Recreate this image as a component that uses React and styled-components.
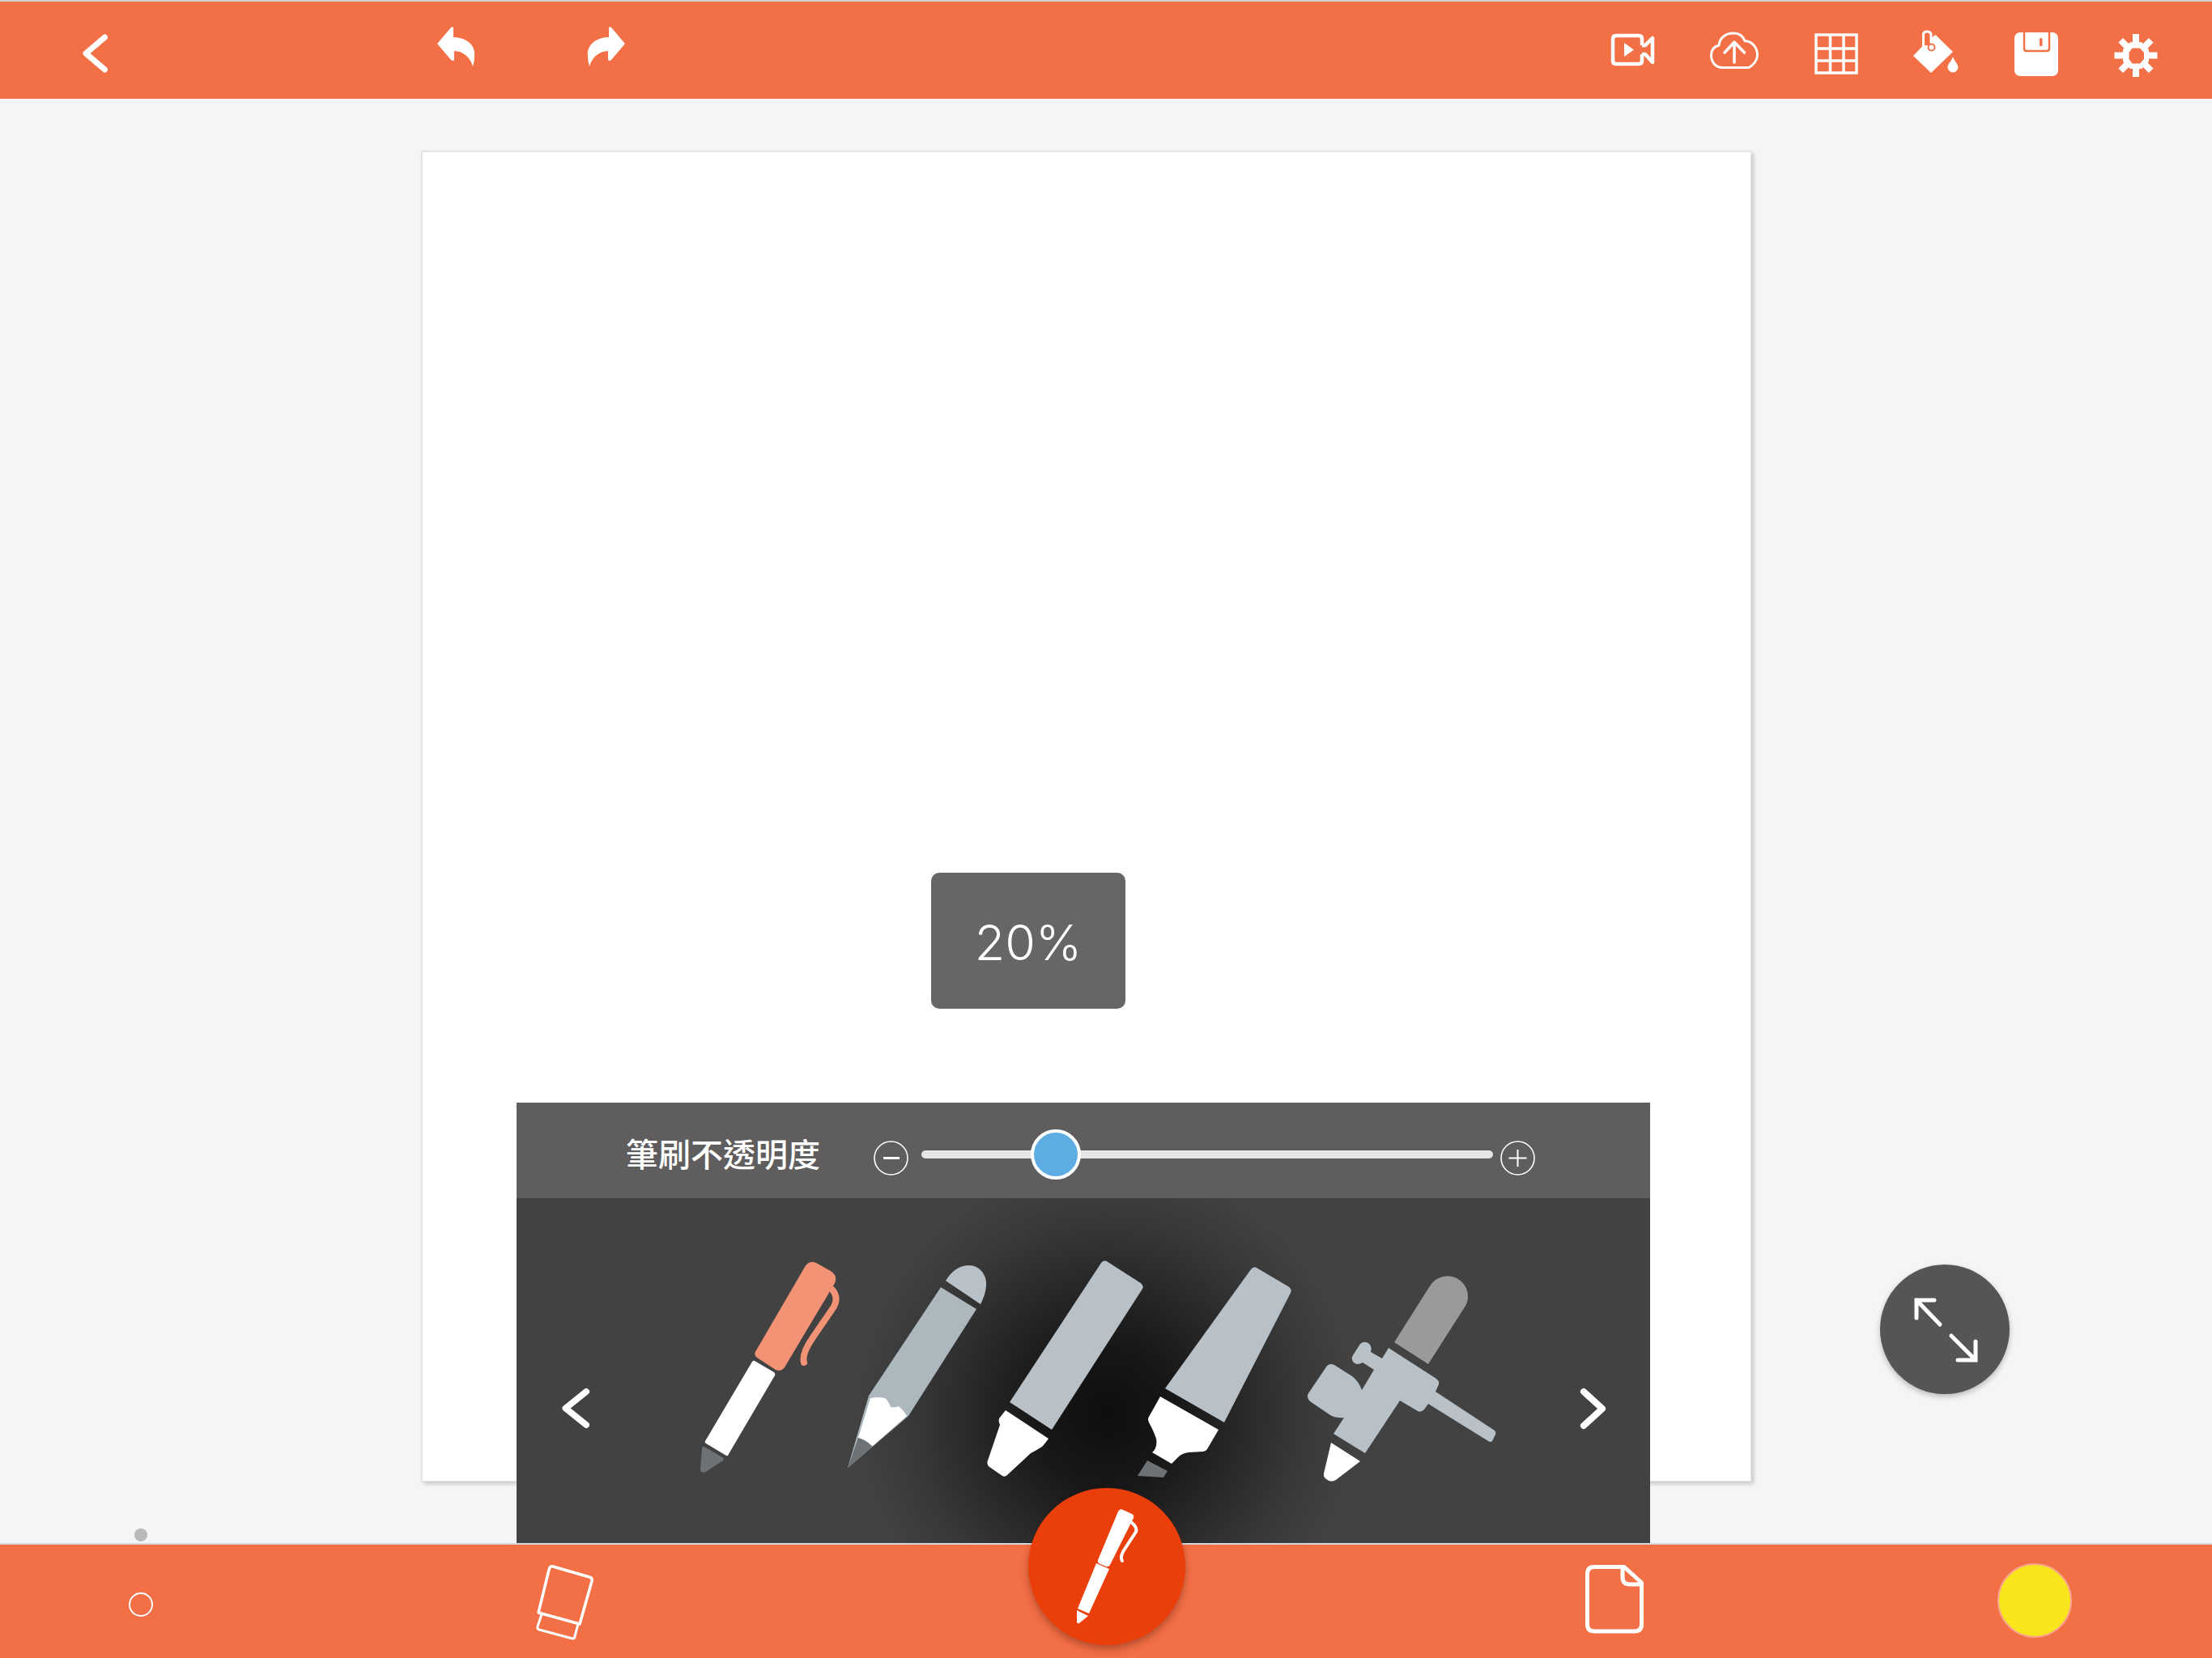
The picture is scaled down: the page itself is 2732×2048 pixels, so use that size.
import React from "react";
import styled, { createGlobalStyle } from "styled-components";

const ORANGE = "#f36f46";
const CAP = "#f39375";
const STEEL = "#b8c1c7";
const LEAD = "#6c7276";

const GlobalStyle = createGlobalStyle`
  html, body {
    margin: 0;
    padding: 0;
    background: #f5f5f5;
    font-family: "Liberation Sans", "Noto Sans CJK TC", sans-serif;
  }
`;

const Page = styled.div`
  position: relative;
  display: flex;
  flex-direction: column;
  width: 2732px;
  height: 2048px;
  overflow: hidden;
  background: #f5f5f5;
`;

const TopBar = styled.header`
  display: flex;
  flex: none;
  height: 120px;
  border-top: 2px solid #cfcfcf;
  background: ${ORANGE};
`;

const TopLeft = styled.div`
  display: flex;
  padding-left: 102px;
`;

const HistoryGroup = styled.div`
  display: flex;
  gap: 140px;
  margin-left: 407px;
`;

const TopRight = styled.div`
  display: flex;
  gap: 69px;
  margin-left: auto;
  padding-right: 68px;
`;

const Main = styled.main`
  position: relative;
  flex: 1;
  padding: 64px 0 0 520px;
`;

const Paper = styled.div`
  box-sizing: border-box;
  width: 1643px;
  height: 1644px;
  background: #fff;
  border: 2px solid #e6e6e6;
  border-right-width: 1px;
  border-bottom-width: 1px;
  box-shadow: 3px 3px 5px rgba(0, 0, 0, 0.18);
`;

const Tooltip = styled.div`
  position: absolute;
  left: 1150px;
  top: 956px;
  display: flex;
  align-items: center;
  justify-content: center;
  box-sizing: border-box;
  width: 240px;
  height: 168px;
  padding-top: 4px;
  border-radius: 10px;
  background: #666;
  color: #fff;
  font-family: "Inter", "Liberation Sans", sans-serif;
  font-size: 61px;
  font-weight: 300;
  line-height: 1;
`;

const PagerDot = styled.span`
  position: absolute;
  left: 166px;
  top: 1766px;
  width: 16px;
  height: 16px;
  border-radius: 50%;
  background: #b9b9b9;
`;

const Panel = styled.section`
  position: absolute;
  left: 638px;
  top: 1240px;
  display: flex;
  flex-direction: column;
  width: 1400px;
  height: 544px;
`;

const SliderRow = styled.div`
  display: flex;
  flex: none;
  align-items: center;
  height: 118px;
  padding-left: 135px;
  background: #5f5d5e;
`;

const SliderLabel = styled.span`
  width: 237px;
  margin-top: 6px;
  color: #fff;
  font-family: "Noto Sans CJK TC", "Liberation Sans", sans-serif;
  font-size: 40px;
  font-weight: 500;
  line-height: 1;
  white-space: nowrap;
`;

const RoundStep = styled.svg`
  display: block;
  flex: none;
  width: 43px;
  height: 43px;
  margin-top: 18px;
  margin-left: ${(p) => p.$gap}px;
`;

const Track = styled.div`
  position: relative;
  flex: none;
  width: 706px;
  height: 10px;
  margin-top: 10px;
  margin-left: 16px;
  border-radius: 5px;
  background: #e5e5e5;
`;

const Thumb = styled.span`
  position: absolute;
  top: -26px;
  box-sizing: border-box;
  width: 62px;
  height: 62px;
  margin-left: -31px;
  border: 4px solid #fff;
  border-radius: 50%;
  background: #5dade2;
`;

const BrushRow = styled.div`
  display: flex;
  flex: 1;
  padding-left: 56px;
  background: radial-gradient(
    circle at 729px 267px,
    #0e0e0e 0,
    #181818 90px,
    #272727 160px,
    #383838 240px,
    #424242 310px
  );
`;

const BrushList = styled.div`
  display: flex;
  margin-left: 137px;
  margin-right: 105px;
`;

const BottomBar = styled.footer`
  display: flex;
  flex: none;
  align-items: center;
  height: 140px;
  border-top: 2px solid #d3dadc;
  background: ${ORANGE};
`;

const RingTool = styled.span`
  box-sizing: border-box;
  flex: none;
  width: 30px;
  height: 30px;
  margin-top: 8px;
  margin-left: 159px;
  border: 2px solid #fff;
  border-radius: 50%;
`;

const BarSlot = styled.div`
  display: flex;
  flex: none;
  align-self: stretch;
  margin-left: ${(p) => p.$gap}px;
`;

const ColorWell = styled.span`
  box-sizing: border-box;
  flex: none;
  width: 92px;
  height: 92px;
  margin-top: -2px;
  margin-left: 437px;
  border: 2px solid #f6a58d;
  border-radius: 50%;
  background: #f9e51c;
`;

const PenFab = styled.button`
  position: absolute;
  left: 1270px;
  top: 1838px;
  display: flex;
  align-items: center;
  justify-content: center;
  width: 194px;
  height: 194px;
  padding: 0;
  border: 0;
  border-radius: 50%;
  background: #ea3f0a;
  box-shadow: 0 5px 10px rgba(90, 30, 10, 0.4);
`;

const ExpandFab = styled.button`
  position: absolute;
  left: 2322px;
  top: 1440px;
  display: flex;
  align-items: center;
  justify-content: center;
  width: 160px;
  height: 160px;
  padding: 0;
  border: 0;
  border-radius: 50%;
  background: #565455;
  box-shadow: 0 3px 7px rgba(0, 0, 0, 0.25);
`;

const GlyphSvg = styled.svg`
  display: block;
  flex: none;
  overflow: visible;
`;

// the viewBox is the drawing's place on the page, so paths read in page pixels
const Glyph = ({ x, y, w, h, children }) => (
  <GlyphSvg width={w} height={h} viewBox={`${x} ${y} ${w} ${h}`}>
    {children}
  </GlyphSvg>
);

const TopGlyph = ({ x, w, children }) => (
  <Glyph x={x} y={2} w={w} h={120}>
    {children}
  </Glyph>
);

const BrushGlyph = ({ x, w, children }) => (
  <Glyph x={x} y={1480} w={w} h={426}>
    {children}
  </Glyph>
);

const BottomGlyph = ({ x, w, children }) => (
  <Glyph x={x} y={1908} w={w} h={140}>
    {children}
  </Glyph>
);

const UNDO =
  "M540 54 L557 34 Q558.5 32.5 560 34 V46 C575 46 588 55 586 70 Q586 76 584 82 C581 72 573 63 561 63 V74 Q559 76 557 74 Z";

const GEAR_RING =
  "M2631 52 H2645 L2654 61 V76 L2645 85 H2631 L2622 76 V61 Z M2633.5 59.5 L2629.5 65 V73 L2633.5 78.5 H2643 L2648 73 V65 L2643 59.5 Z";

const Gear = () => (
  <g fill="#fff">
    <path d={GEAR_RING} fillRule="evenodd" />
    {[0, 45, 90, 135, 180, 225, 270, 315].map((deg) => (
      <rect key={deg} x="2634" y="42" width="8" height="14" transform={`rotate(${deg} 2638 68.5)`} />
    ))}
  </g>
);

const Chevron = ({ points }) => (
  <polyline points={points} fill="none" stroke="#fff" strokeWidth="8" strokeLinecap="round" strokeLinejoin="round" />
);

export default function App() {
  return (
    <Page>
      <GlobalStyle />
      <TopBar>
        <TopLeft>
          <TopGlyph x={102} w={31}>
            <polyline
              points="129.5,46 106,66 129.5,86"
              fill="none"
              stroke="#fff"
              strokeWidth="7"
              strokeLinecap="round"
              strokeLinejoin="round"
            />
          </TopGlyph>
          <HistoryGroup>
            <TopGlyph x={540} w={46}>
              <path d={UNDO} fill="#fff" />
            </TopGlyph>
            <TopGlyph x={726} w={46}>
              <path d={UNDO} fill="#fff" transform="translate(1312 0) scale(-1 1)" />
            </TopGlyph>
          </HistoryGroup>
        </TopLeft>
        <TopRight>
          <TopGlyph x={1989} w={54}>
            <g fill="none" stroke="#fff" strokeWidth="4.5" strokeLinejoin="round">
              <path d="M2028 56 V48 Q2028 44 2024 44 H1996 Q1992 44 1992 48 V75 Q1992 79 1996 79 H2024 Q2028 79 2028 75 V67" />
              <path d="M2028 56 H2032 L2041 47 V77 L2032 67 H2028" />
            </g>
            <polygon points="2006,53 2018,61.5 2006,70" fill="#fff" />
          </TopGlyph>
          <TopGlyph x={2112} w={60}>
            <g fill="none" stroke="#fff" strokeLinecap="round" strokeLinejoin="round">
              <path
                strokeWidth="3"
                d="M2128 83.5 C2118 83.5 2113.5 76 2113.5 68 C2113.5 62 2117 57.5 2123 56 C2124 46 2132 41 2141 41 C2148 41 2153 45 2155 50.5 C2165 51 2170.5 60 2170.5 68 C2170.5 74 2166 80 2160 83.5 Z"
              />
              <path strokeWidth="3.5" d="M2142 77 V52 M2130 65 L2142 52 L2154.5 65" />
            </g>
          </TopGlyph>
          <TopGlyph x={2241} w={53}>
            <path
              d="M2243 43 H2293 V90 H2243 Z M2260.5 43 V90 M2277 43 V90 M2243 60 H2293 M2243 75 H2293"
              fill="none"
              stroke="#fff"
              strokeWidth="3.5"
            />
          </TopGlyph>
          <TopGlyph x={2363} w={56}>
            <polygon points="2390.5,43 2412,64 2385,90 2363,69 2381,50" fill="#fff" />
            <path d="M2380.5 41 V56" stroke={ORANGE} strokeWidth="7" fill="none" />
            <path d="M2375.5 60 V43 Q2375.5 39 2380 39 Q2385 39 2385 43 V56" stroke="#fff" strokeWidth="3" fill="none" />
            <circle cx="2385.5" cy="58.5" r="4" fill="#fff" stroke={ORANGE} strokeWidth="2" />
            <path
              d="M2412 70 C2414 76 2418.5 79 2418.5 83 A6.5 6.5 0 0 1 2405.5 83 C2405.5 79 2410 76 2412 70 Z"
              fill="#fff"
            />
          </TopGlyph>
          <TopGlyph x={2488} w={55}>
            <rect x="2488" y="40" width="54" height="54" rx="7" fill="#fff" />
            <path d="M2500 40 V60 Q2500 63 2503 63 H2528 Q2531 63 2531 60 V40" fill="none" stroke={ORANGE} strokeWidth="2.4" />
            <rect x="2519" y="47" width="3.5" height="10" rx="1.5" fill={ORANGE} />
          </TopGlyph>
          <TopGlyph x={2612} w={52}>
            <Gear />
          </TopGlyph>
        </TopRight>
      </TopBar>

      <Main>
        <Paper />
        <Tooltip>20%</Tooltip>
        <PagerDot />
        <Panel>
          <SliderRow>
            <SliderLabel>筆刷不透明度</SliderLabel>
            <RoundStep $gap={69} viewBox="0 0 43 43">
              <circle cx="21.5" cy="21.5" r="20.5" fill="none" stroke="#fff" strokeWidth="1.6" />
              <path d="M12 21.5 H32" stroke="#fff" strokeWidth="3" />
            </RoundStep>
            <Track>
              <Thumb style={{ left: `${(166 / 706) * 100}%` }} />
            </Track>
            <RoundStep $gap={9} viewBox="0 0 43 43">
              <circle cx="21.5" cy="21.5" r="20.5" fill="none" stroke="#fff" strokeWidth="1.6" />
              <path d="M10.5 21.5 H32.5 M21.5 11 V32" stroke="#fff" strokeWidth="2" />
            </RoundStep>
          </SliderRow>
          <BrushRow>
            <Glyph x={694} y={1480} w={34} h={426}>
              <Chevron points="724,1719 698.5,1739.5 724,1760" />
            </Glyph>
            <BrushList>
              <BrushGlyph x={865} w={182}>
                <path
                  d="M934 1668 L994 1565 Q1000 1555 1010 1561 L1026 1570 Q1035 1576 1031 1585 L969 1689 Q964 1695 958 1692 L935 1677 Q930 1673 934 1668 Z"
                  fill={CAP}
                />
                <path
                  d="M1028 1593 Q1036 1603 1030 1614 L1004 1652 Q990 1672 993 1683"
                  fill="none"
                  stroke={CAP}
                  strokeWidth="8"
                  strokeLinecap="round"
                />
                <path
                  d="M929 1682 Q930.5 1680 932 1681 L956 1695 Q958 1697 957 1699 L900 1796 Q899 1799 897 1798 L872 1783 Q870 1782 871 1780 Z"
                  fill="#fff"
                />
                <path d="M870 1787 L892 1800 Q895 1802 893 1804 L871 1818.5 Q865 1820 865 1815 L867 1789 Q868 1786 870 1787 Z" fill={LEAD} />
              </BrushGlyph>
              <BrushGlyph x={1047} w={172}>
                <path
                  d="M1168 1582 C1175 1570 1185 1563 1197 1563 C1210 1563 1219 1575 1218 1588 Q1217 1600 1211 1611 Z"
                  fill={STEEL}
                />
                <polygon points="1162,1590 1206,1617 1122,1749 1047,1813 1073,1724" fill="#adb8be" />
                <path
                  d="M1075 1727 Q1085 1725 1093 1727 Q1097 1730 1100 1738 Q1106 1739 1110 1737 Q1116 1742 1120 1749 L1078 1786 L1060 1776 Z"
                  fill="#fff"
                />
                <path d="M1060 1776 Q1071 1779 1077 1787 L1047 1813 Z" fill={LEAD} />
              </BrushGlyph>
              <BrushGlyph x={1219} w={186}>
                <path
                  d="M1247 1732 L1360 1560 Q1363 1556 1367 1558 L1409 1585 Q1413 1588 1411 1592 L1299 1766 Z"
                  fill={STEEL}
                />
                <path
                  d="M1242 1742 L1295 1777 Q1290 1784 1287 1787 Q1279 1792 1273 1795 L1244 1822 Q1241 1825 1238 1823 L1222 1812 Q1218 1809 1220 1804 L1235 1760 Q1233 1756 1234 1752 Z"
                  fill="#fff"
                />
              </BrushGlyph>
              <BrushGlyph x={1405} w={210}>
                <path
                  d="M1439 1715 L1545 1568 Q1548 1564 1552 1566 L1591 1589 Q1596 1592 1594 1597 L1512 1757 Z"
                  fill={STEEL}
                />
                <path
                  d="M1433 1725 L1505 1766 L1491 1790 Q1489 1793 1486 1793 L1468 1794 Q1460 1795 1455 1800 L1447 1808 L1423 1794 Q1430 1788 1428 1777 Q1425 1768 1419 1757 Q1417 1753 1419 1750 Z"
                  fill="#fff"
                />
                <polygon points="1417,1804 1442,1817 1437,1825 1405,1823" fill={LEAD} />
              </BrushGlyph>
              <BrushGlyph x={1615} w={232}>
                <path
                  d="M1722 1658 L1767 1587 C1775 1576 1790 1573 1801 1580 C1813 1587 1816 1603 1810 1613 L1764 1685 Z"
                  fill="#9a9a9a"
                />
                <path
                  d="M1715 1665 L1774 1703 Q1778 1706 1777 1710 L1773 1719 L1846 1767 Q1848 1769 1847 1772 L1843 1780 Q1841 1782 1838 1780 L1764 1734 L1759 1741 Q1755 1745 1751 1743 L1729 1730 L1686 1795 L1647 1771 L1660 1751 Q1650 1752 1643 1748 L1618 1731 Q1613 1726 1616 1721 L1637 1690 Q1641 1683 1648 1686 L1670 1700 Q1678 1706 1682 1717 L1697 1692 L1683 1683 Q1676 1687 1672 1683 Q1668 1679 1671 1674 L1680 1660 Q1684 1656 1690 1659 Q1695 1663 1693 1670 L1707 1678 Z"
                  fill={STEEL}
                />
                <path d="M1644 1782 L1680 1805 L1650 1828 Q1644 1832 1638 1827 Q1634 1824 1635 1820 Z" fill="#fff" />
              </BrushGlyph>
            </BrushList>
            <Glyph x={1952} y={1480} w={31} h={426}>
              <Chevron points="1956,1719 1979,1740 1956,1761" />
            </Glyph>
          </BrushRow>
        </Panel>
        <ExpandFab>
          <Glyph x={2322} y={1562} w={160} h={160}>
            <path
              d="M2389 1606 H2367 V1628 M2367 1606 L2396 1636 M2410 1650 L2440 1680 M2440 1657 V1680 H2418"
              fill="none"
              stroke="#fff"
              strokeWidth="5"
              strokeLinecap="round"
            />
          </Glyph>
        </ExpandFab>
      </Main>

      <BottomBar>
        <RingTool />
        <BarSlot $gap={473}>
          <BottomGlyph x={662} w={72}>
            <g fill="none" stroke="#fff" strokeLinejoin="round">
              <path strokeWidth="3.5" d="M683 1935 L728 1948 Q732 1949 731 1953 L716 2006 L665 1992 L678 1939 Q679 1934 683 1935 Z" />
              <path strokeWidth="3" d="M669 1994 L664 2009 Q663 2012 666 2013 L707 2024 Q710 2024 710 2021 L714 2006" />
            </g>
          </BottomGlyph>
        </BarSlot>
        <BarSlot $gap={1224}>
          <BottomGlyph x={1958} w={72}>
            <g fill="none" stroke="#fff" strokeWidth="5" strokeLinejoin="round">
              <path d="M2006 1935.5 H1969 Q1960.5 1935.5 1960.5 1944 V2006 Q1960.5 2015 1969 2015 H2019 Q2027.5 2015 2027.5 2006 V1955 Z" />
              <path d="M2004 1936 V1948 Q2004 1957 2013 1957 H2027" />
            </g>
          </BottomGlyph>
        </BarSlot>
        <ColorWell />
      </BottomBar>

      <PenFab>
        <Glyph x={1331} y={1864} w={74} h={142}>
          <path
            d="M1382 1867 Q1384 1863 1388 1865 L1399 1870 Q1402 1872 1401 1875 L1372 1933 Q1370 1936 1367 1935 L1358 1931 Q1356 1929 1357 1927 Z"
            fill="#fff"
          />
          <path d="M1399 1881 Q1406 1887 1404 1892 L1389 1915 Q1384 1923 1387 1928" fill="none" stroke="#fff" strokeWidth="4" strokeLinecap="round" />
          <polygon points="1355,1931 1371,1938 1346,1993 1332,1987" fill="#fff" />
          <path d="M1331 1989 L1345 1996 L1334 2005 Q1331 2006 1331 2003 Z" fill="#fff" />
        </Glyph>
      </PenFab>
    </Page>
  );
}
